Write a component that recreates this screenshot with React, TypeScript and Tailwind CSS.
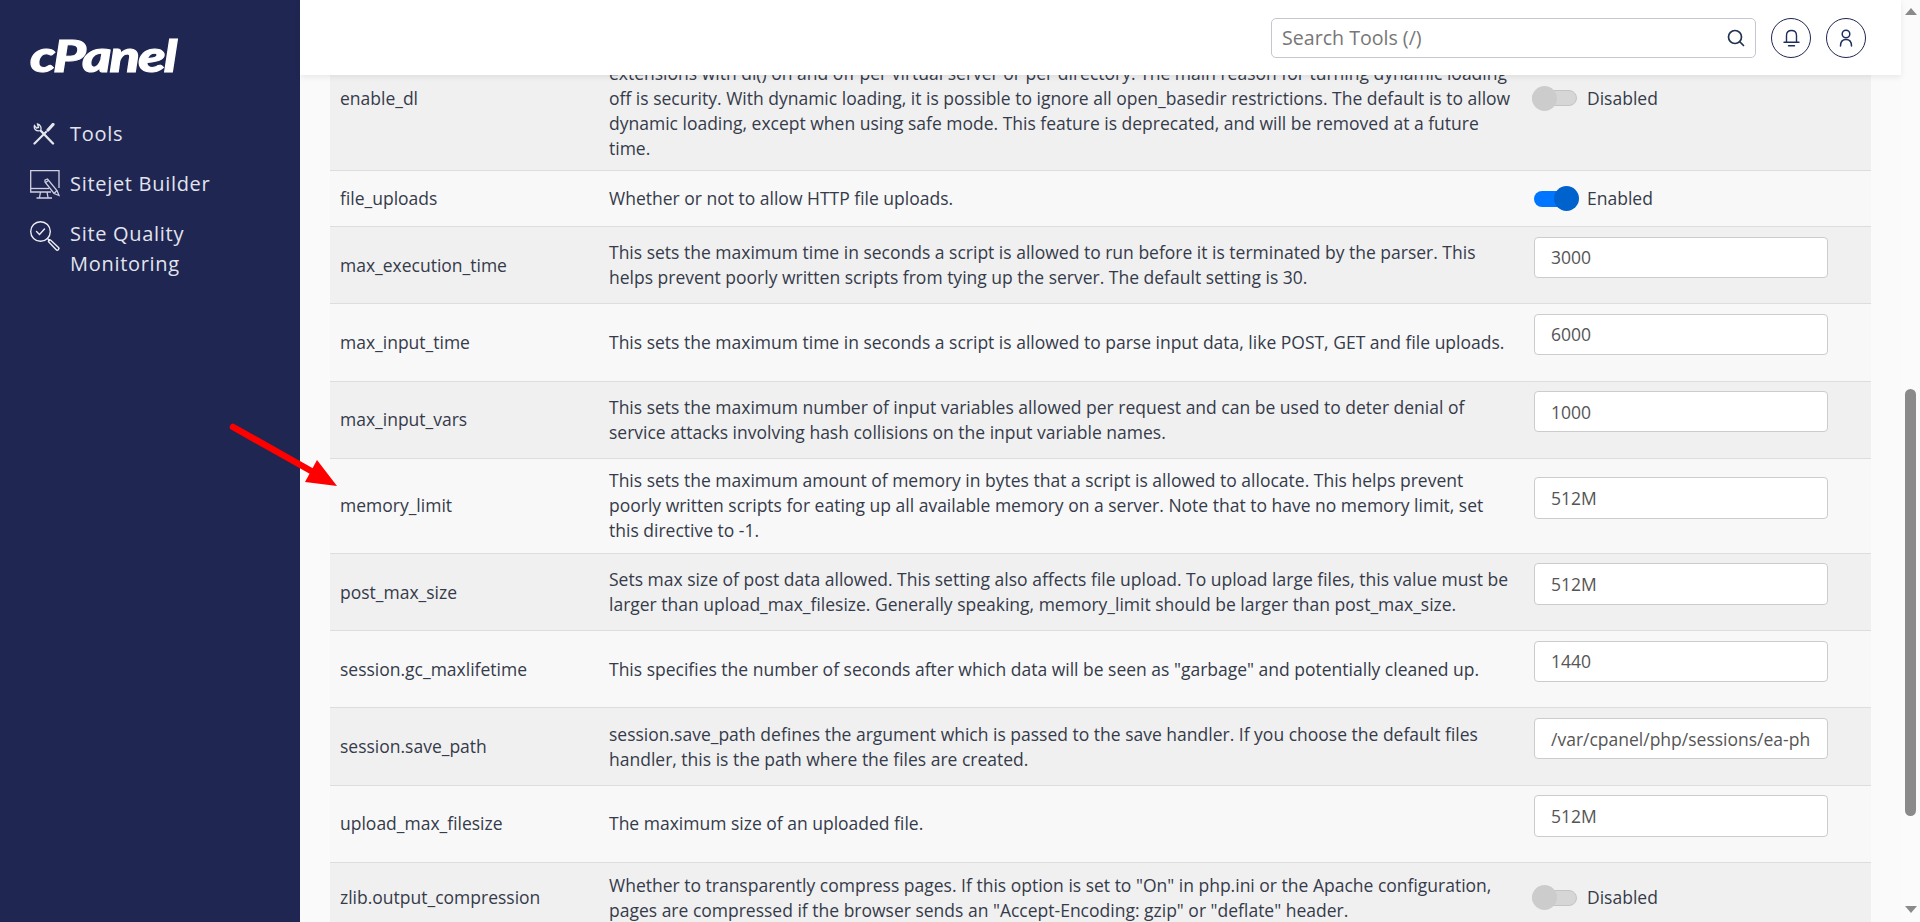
const sans = "font-['Open_Sans',sans-serif]"

type Row = {
  name: string
  desc: string
  value?: string
  toggle?: boolean
}

const rows: Row[] = [
  {
    name: "enable_dl",
    desc: "This directive is really only useful in the Apache module version of PHP. You can turn dynamic loading of PHP extensions with dl() on and off per virtual server or per directory. The main reason for turning dynamic loading off is security. With dynamic loading, it is possible to ignore all open_basedir restrictions. The default is to allow dynamic loading, except when using safe mode. This feature is deprecated, and will be removed at a future time.",
    toggle: false,
  },
  { name: "file_uploads", desc: "Whether or not to allow HTTP file uploads.", toggle: true },
  {
    name: "max_execution_time",
    desc: "This sets the maximum time in seconds a script is allowed to run before it is terminated by the parser. This helps prevent poorly written scripts from tying up the server. The default setting is 30.",
    value: "3000",
  },
  {
    name: "max_input_time",
    desc: "This sets the maximum time in seconds a script is allowed to parse input data, like POST, GET and file uploads.",
    value: "6000",
  },
  {
    name: "max_input_vars",
    desc: "This sets the maximum number of input variables allowed per request and can be used to deter denial of service attacks involving hash collisions on the input variable names.",
    value: "1000",
  },
  {
    name: "memory_limit",
    desc: "This sets the maximum amount of memory in bytes that a script is allowed to allocate. This helps prevent poorly written scripts for eating up all available memory on a server. Note that to have no memory limit, set this directive to -1.",
    value: "512M",
  },
  {
    name: "post_max_size",
    desc: "Sets max size of post data allowed. This setting also affects file upload. To upload large files, this value must be larger than upload_max_filesize. Generally speaking, memory_limit should be larger than post_max_size.",
    value: "512M",
  },
  {
    name: "session.gc_maxlifetime",
    desc: 'This specifies the number of seconds after which data will be seen as "garbage" and potentially cleaned up.',
    value: "1440",
  },
  {
    name: "session.save_path",
    desc: "session.save_path defines the argument which is passed to the save handler. If you choose the default files handler, this is the path where the files are created.",
    value: "/var/cpanel/php/sessions/ea-php81",
  },
  { name: "upload_max_filesize", desc: "The maximum size of an uploaded file.", value: "512M" },
  {
    name: "zlib.output_compression",
    desc: 'Whether to transparently compress pages. If this option is set to "On" in php.ini or the Apache configuration, pages are compressed if the browser sends an "Accept-Encoding: gzip" or "deflate" header.',
    toggle: false,
  },
]

const ToolsIcon = () => (
  <svg width="22" height="22" viewBox="0 0 22 22" fill="none" stroke="#e4e6ef" strokeLinecap="round">
    <path d="M1.500 20.500L13 9" strokeWidth="2.200" />
    <path d="M15 7L20 1.500" strokeWidth="3.200" />
    <path d="M8 8L20 20.500" strokeWidth="2.400" />
    <path d="M1.500 2.500C0.500 5.500 3 9 7.500 7.500C8.800 5 7.500 1.500 4.500 1L5.500 4.500L3.500 5Z" strokeWidth="1.300" />
  </svg>
)

const SitejetIcon = () => (
  <svg width="30" height="29" viewBox="0 0 30 29" fill="none" stroke="#cfd1e0" strokeWidth="1.300">
    <path d="M29 18V0.700H0.700V22H21" />
    <path d="M0.700 18.500H19" />
    <path d="M10.500 22L9.500 27.500M17 22L18 27.500M6.500 28H22" />
    <path d="M15 10L17.500 9L27 20.500L29 25.500L24 23.500L15 12Z" fill="#1f2651" />
    <path d="M15.500 12.500L18.500 10.500M24 23.500L27 20.500" />
  </svg>
)

const QualityIcon = () => (
  <svg width="30" height="30" viewBox="0 0 30 30" fill="none" stroke="#eceef5" strokeWidth="1.400" strokeLinecap="round">
    <circle cx="10.500" cy="10.500" r="9.800" />
    <path d="M6.500 10.500L9.500 13.500L14.500 8" />
    <path d="M17.500 17.500L19.500 19.500" />
    <path d="M20.500 19L28.500 26.500C29.800 28 27.500 30.200 26 28.500L18.800 21C17.800 20 19.500 18 20.500 19Z" />
  </svg>
)

const CpanelLogo = () => (
  <div className="origin-left scale-x-[1.27] font-['Lato',sans-serif] text-[44px] leading-none font-black italic tracking-[-1.500px] text-white [-webkit-text-stroke:1px_white]">
    cPanel
  </div>
)

const Sidebar = () => (
  <aside className={`${sans} w-[300px] shrink-0 bg-[#1f2651] pl-[30px] pt-[33px]`}>
    <CpanelLogo />
    <nav className="mt-[42px] flex flex-col gap-[20px] text-[20px] leading-[30px] tracking-[0.7px] text-[#e2e4ee]">
      <div className="flex items-center">
        <span className="flex w-[40px] pl-[3px]"><ToolsIcon /></span>
        Tools
      </div>
      <div className="flex items-center">
        <span className="flex w-[40px]"><SitejetIcon /></span>
        Sitejet Builder
      </div>
      <div className="flex items-start">
        <span className="flex w-[40px] pt-[2px]"><QualityIcon /></span>
        <span>Site Quality<br />Monitoring</span>
      </div>
    </nav>
  </aside>
)

const Toggle = ({ on }: { on: boolean }) => (
  <div className="flex h-[36px] items-center">
    {on ? (
      <div className="relative ml-[2px] h-[16px] w-[40px] rounded-full bg-[#0075ff]">
        <div className="absolute -top-[4.500px] left-[20px] h-[25px] w-[25px] rounded-full bg-[#0062cc]" />
      </div>
    ) : (
      <div className="relative h-[16px] w-[45px] rounded-full border border-[#c4c4c4] bg-[#d6d6d6]">
        <div className="absolute -top-[5.500px] -left-px h-[25px] w-[25px] rounded-full bg-[#cccccc]" />
      </div>
    )}
    <span className={`${on ? "ml-[13px]" : "ml-[10px]"} text-[#353b4a]`}>{on ? "Enabled" : "Disabled"}</span>
  </div>
)

const Topbar = () => (
  <header className="relative z-10 flex h-[75px] shrink-0 items-center justify-end bg-white pr-[35px] shadow-[0_2px_6px_rgba(0,0,0,0.08)]">
    <div className="flex h-[40px] w-[485px] items-center rounded-[5px] border border-[#c6c6d2] pl-[10px] pr-[10px]">
      <span className="flex-1 text-[19.600px] text-[#777]">Search Tools (/)</span>
      <svg width="18" height="18" viewBox="0 0 18 18" fill="none" stroke="#1f3350" strokeWidth="1.700" strokeLinecap="round">
        <circle cx="8" cy="8" r="6.500" />
        <path d="M13 13L16.500 16.500" />
      </svg>
    </div>
    <div className="ml-[15px] flex h-[40px] w-[40px] items-center justify-center rounded-full border-[1.500px] border-[#1f2651]">
      <svg width="17" height="18" viewBox="0 0 17 18" fill="none" stroke="#1f2f5c" strokeWidth="1.400" strokeLinecap="round">
        <path d="M3.500 13V6.500C3.500 3.500 5.500 1.500 8.500 1.500C11.500 1.500 13.500 3.500 13.500 6.500V13" />
        <path d="M1 13.200H16" />
        <path d="M5.500 16.800H11.500" />
      </svg>
    </div>
    <div className="ml-[15px] flex h-[40px] w-[40px] items-center justify-center rounded-full border-[1.500px] border-[#1f2651]">
      <svg width="16" height="18" viewBox="0 0 16 18" fill="none" stroke="#1f2f5c" strokeWidth="1.500" strokeLinecap="round">
        <circle cx="8" cy="5" r="3.800" />
        <path d="M2.500 17C2.500 12.500 5 10.500 8 10.500C11 10.500 13.500 12.500 13.500 17" />
      </svg>
    </div>
  </header>
)

const SettingsTable = () => (
  <table className="-mt-[49px] w-full table-fixed border-collapse text-[17.500px] leading-[25px] text-[#353b4a]">
    <colgroup>
      <col className="w-[269px]" />
      <col className="w-[925px]" />
      <col />
    </colgroup>
    <tbody>
      {rows.map((row, i) => (
        <tr key={row.name} className={`${i % 2 === 0 ? "bg-[#f0f0f0]" : "bg-[#f8f8f8]"} border-b border-[#dddddd]`}>
          <td className="px-[10px] py-[9.500px] align-middle">{row.name}</td>
          <td className="px-[10px] py-[9.500px] align-middle">{row.desc}</td>
          <td className="py-[9.500px] pl-[8px] pr-[43px] align-middle">
            {row.toggle !== undefined ? (
              <Toggle on={row.toggle} />
            ) : (
              <input
                readOnly
                value={row.value}
                className="mb-[16px] ml-[2px] block h-[41.300px] w-[294px] rounded border border-[#cccccc] bg-white px-[16px] text-[#555]"
              />
            )}
          </td>
        </tr>
      ))}
    </tbody>
  </table>
)

const Scrollbar = () => (
  <div className="flex w-[19px] shrink-0 flex-col items-center bg-[#fbfbfb]">
    <div className="mt-[8px] h-0 w-0 border-x-[6.500px] border-b-[7px] border-x-transparent border-b-[#8a8a8a]" />
    <div className="mt-[374px] h-[427px] w-[11px] rounded-full bg-[#8a8a8a]" />
    <div className="mt-[90px] h-0 w-0 border-x-[6.500px] border-t-[7px] border-x-transparent border-t-[#8a8a8a]" />
  </div>
)

// red annotation laid over the screenshot
const RedArrow = () => (
  <svg className="absolute left-[225px] top-[420px] z-20" width="120" height="75" viewBox="0 0 120 75">
    <path d="M8 7L88 52" stroke="#ff0000" strokeWidth="6.500" strokeLinecap="round" />
    <path d="M112 66L80 62L92 40Z" fill="#ff0000" />
  </svg>
)

export default function App() {
  return (
    <div className={`${sans} relative flex h-screen w-full overflow-hidden bg-[#fafafa]`}>
      <Sidebar />
      <div className="flex min-w-0 flex-1 flex-col">
        <Topbar />
        <main className="min-h-0 flex-1 overflow-hidden px-[30px]">
          <SettingsTable />
        </main>
      </div>
      <Scrollbar />
      <RedArrow />
    </div>
  )
}
